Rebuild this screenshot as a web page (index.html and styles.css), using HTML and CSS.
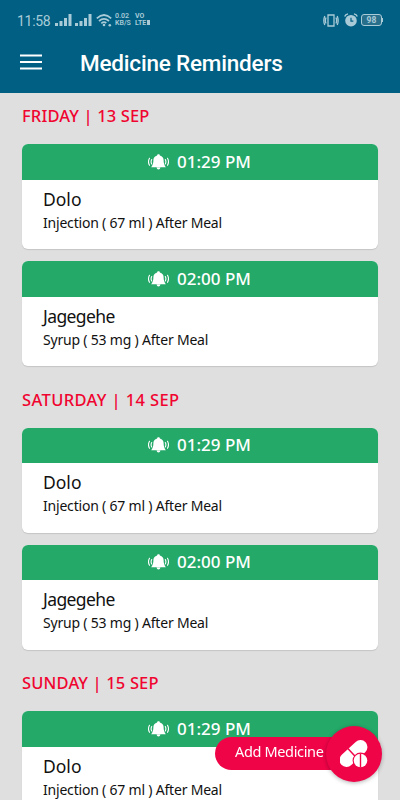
FILE: index.html
```html
<!DOCTYPE html>
<html lang="en">
<head>
  <meta charset="UTF-8" />
  <meta name="viewport" content="width=device-width, initial-scale=1" />
  <title>Medicine Reminders</title>
  <link rel="stylesheet" href="styles.css">
</head>
<body>
  <svg width="0" height="0" class="defs">
    <symbol id="bell" viewBox="0 0 21 16">
      <path fill="#fff" d="M10.500 0.200c.9 0 1.300.5 1.400 1.200 2.400.6 3.700 2.300 3.700 4.700 0 3 .5 4.900 2.200 7.100H3.200c1.700-2.200 2.200-4.100 2.200-7.100 0-2.400 1.300-4.100 3.700-4.700.1-.7.5-1.200 1.400-1.200zM8.600 13.600h3.800c-.2 1.200-.9 1.900-1.900 1.900s-1.700-.7-1.900-1.900z"/>
      <path fill="none" stroke="#fff" stroke-width="1.100" stroke-linecap="round" d="M3.700 5.600q-1.200 2.200 0 4.400M1.500 4.300q-2 3.500 0 7M17.300 5.600q1.200 2.200 0 4.400M19.500 4.300q2 3.500 0 7"/>
    </symbol>
    <symbol id="signal" viewBox="0 0 17 12">
      <path d="M0 9h3v3H0zM4.500 7h3v5h-3zM9 4h3v8H9zM13.500 0h3v12h-3z"/>
    </symbol>
  </svg>

  <header>
    <div class="status-bar">
      <span class="clock">11:58</span>
      <svg class="signal" width="17" height="12"><use href="#signal"/></svg>
      <svg class="signal" width="17" height="12"><use href="#signal"/></svg>
      <svg class="wifi" width="16" height="13" viewBox="0 0 16 13">
        <path d="M.8 4.300Q8-2.300 15.200 4.300M3 7q5-4.400 10 0M5.300 9.300Q8 7 10.300 9"/>
        <circle class="dot" cx="8" cy="11" r="1.300"/>
        <circle class="dot" cx="13.800" cy="11.300" r="1.300"/>
      </svg>
      <span class="tiny speed"><span>0.02</span><span>KB/S</span></span>
      <span class="tiny volte"><span>VO</span><span>LTE<i></i></span></span>
      <span class="status-right">
        <svg class="vibrate" width="16" height="13" viewBox="0 0 16 13">
          <path d="M5 1h6v11H5zM3 3.500Q1.800 6.500 3 9.500M13 3.500q1.200 3 0 6M1.800 2q-2 4.500 0 9M14.200 2q2 4.500 0 9"/>
        </svg>
        <svg class="alarm" width="14" height="14" viewBox="0 0 14 14">
          <circle cx="7" cy="7.700" r="5.800"/>
          <path class="ears" d="M.7 3.600Q1.500 1.400 4 .9M13.300 3.600Q12.500 1.400 10 .9"/>
          <path class="hands" d="M7 4.700v3.500h2.300"/>
        </svg>
        <span class="battery">98</span>
      </span>
    </div>
    <div class="app-bar">
      <svg class="menu" width="22" height="16" viewBox="0 0 22 16">
        <path d="M0 1.500h22M0 8h22M0 14.500h22"/>
      </svg>
      <h1>Medicine Reminders</h1>
    </div>
  </header>

  <main>
    <section>
      <h2 class="friday">FRIDAY | 13 SEP</h2>
      <div class="card">
        <div class="time"><svg width="21" height="16"><use href="#bell"/></svg><span>01:29 PM</span></div>
        <h3>Dolo</h3>
        <p>Injection ( 67 ml ) After Meal</p>
      </div>
      <div class="card">
        <div class="time"><svg width="21" height="16"><use href="#bell"/></svg><span>02:00 PM</span></div>
        <h3 class="long">Jagegehe</h3>
        <p>Syrup ( 53 mg ) After Meal</p>
      </div>
    </section>

    <section>
      <h2 class="saturday">SATURDAY | 14 SEP</h2>
      <div class="card">
        <div class="time"><svg width="21" height="16"><use href="#bell"/></svg><span>01:29 PM</span></div>
        <h3>Dolo</h3>
        <p>Injection ( 67 ml ) After Meal</p>
      </div>
      <div class="card">
        <div class="time"><svg width="21" height="16"><use href="#bell"/></svg><span>02:00 PM</span></div>
        <h3 class="long">Jagegehe</h3>
        <p>Syrup ( 53 mg ) After Meal</p>
      </div>
    </section>

    <section>
      <h2 class="sunday">SUNDAY | 15 SEP</h2>
      <div class="card">
        <div class="time"><svg width="21" height="16"><use href="#bell"/></svg><span>01:29 PM</span></div>
        <h3>Dolo</h3>
        <p>Injection ( 67 ml ) After Meal</p>
      </div>
    </section>
  </main>

  <button class="add">
    <span class="add-label">Add Medicine</span>
    <span class="add-icon">
      <svg width="28" height="28" viewBox="0 0 28 28">
        <g transform="rotate(-43 13.500 13.500)">
          <rect x="-3" y="6.500" width="33" height="14" rx="7" fill="#fff"/>
          <path d="M12.800 6v15" stroke="#f00448" stroke-width="1.500"/>
        </g>
        <circle cx="20.500" cy="20.500" r="7.900" fill="#f00448"/>
        <circle cx="20.500" cy="20.500" r="6.800" fill="#fff"/>
        <path d="M20.500 13.500v14" stroke="#f00448" stroke-width="1.400"/>
      </svg>
    </span>
  </button>
</body>
</html>
```
FILE: styles.css
```css
* {
  box-sizing: border-box;
}
body {
  margin: 0;
  height: 800px;
  overflow: hidden;
  background: #dfdfdf;
  font-family: 'Noto Sans', sans-serif;
  color: #111;
}
.defs {
  display: block;
}
header {
  height: 93px;
  background: #005f82;
  font-family: Roboto, sans-serif;
}
.status-bar {
  display: flex;
  align-items: center;
  height: 40px;
  padding: 0 17px;
  color: #a9cbd8;
}
.clock {
  width: 38px;
  font-size: 14px;
  line-height: 40px;
  letter-spacing: -0.3px;
  padding-top: 1px;
}
.signal {
  fill: #a9cbd8;
  margin-right: 3px;
}
.wifi {
  margin-left: 1px;
  fill: none;
  stroke: #a9cbd8;
  stroke-width: 1.7;
}
.wifi .dot {
  fill: #a9cbd8;
  stroke: none;
}
.tiny {
  display: flex;
  flex-direction: column;
  font-size: 7px;
  line-height: 7px;
  font-weight: 600;
}
.speed {
  width: 20px;
  margin-left: 3px;
}
.volte {
  font-weight: 700;
}
.volte i {
  display: inline-block;
  width: 3px;
  height: 5px;
  margin-left: 1px;
  background: #a9cbd8;
}
.status-right {
  display: flex;
  align-items: center;
  gap: 5px;
  margin-left: auto;
}
.vibrate {
  fill: none;
  stroke: #a9cbd8;
  stroke-width: 1.3;
}
.alarm {
  fill: #a9cbd8;
}
.alarm .ears {
  fill: none;
  stroke: #a9cbd8;
  stroke-width: 1.4;
}
.alarm .hands {
  fill: none;
  stroke: #005f82;
  stroke-width: 1.2;
}
.battery {
  position: relative;
  width: 21px;
  height: 12px;
  margin-left: -2px;
  margin-right: 1px;
  border: 1px solid #a9cbd8;
  border-radius: 3px;
  font-size: 8.5px;
  line-height: 11px;
  font-weight: 700;
  text-align: center;
  background: #286f8c;
}
.battery::after {
  content: '';
  position: absolute;
  right: -2px;
  top: 3px;
  width: 1px;
  height: 4px;
  background: #a9cbd8;
}
.app-bar {
  display: flex;
  align-items: center;
  height: 44px;
  padding-left: 20px;
}
.menu {
  stroke: #fff;
  stroke-width: 2;
}
h1 {
  margin: 0 0 0 38px;
  padding-top: 2px;
  font-size: 22.5px;
  font-weight: 500;
  letter-spacing: -0.2px;
  color: #fff;
}
main {
  padding: 0 22px;
}
section {
  margin-bottom: 10.5px;
}
h2 {
  height: 51px;
  margin: 0;
  font-size: 16.5px;
  font-weight: 500;
  line-height: 45px;
  color: #f00430;
  white-space: nowrap;
}
.friday,
.sunday {
  letter-spacing: 0.15px;
}
.saturday {
  letter-spacing: 0.38px;
}
.card {
  height: 105px;
  margin-bottom: 12px;
  border-radius: 6px;
  background: #fff;
  overflow: hidden;
  box-shadow: 0 1px 1px rgba(0,0,0,0.12);
}
.card:last-child {
  margin-bottom: 0;
}
.time {
  display: flex;
  align-items: center;
  gap: 8px;
  height: 35.5px;
  padding-left: 126px;
  background: #24a969;
  color: #fff;
  font-size: 17px;
  font-weight: 500;
  line-height: 36px;
}
h3 {
  margin: 7.4px 0 0 21px;
  font-size: 17.5px;
  font-weight: 400;
  line-height: 24px;
}
.long {
  letter-spacing: -0.6px;
}
.card p {
  margin: 0 0 0 21px;
  font-size: 14px;
  line-height: 23px;
  letter-spacing: -0.2px;
  white-space: nowrap;
}
.add {
  position: fixed;
  left: 215px;
  top: 725px;
  display: flex;
  align-items: center;
  width: 167px;
  height: 57px;
  padding: 0;
  border: none;
  background: none;
  font-family: inherit;
  color: #fff;
}
.add-label {
  width: 139px;
  height: 33px;
  margin-right: -28px;
  padding-left: 20px;
  border-radius: 17px;
  background: #f00448;
  font-size: 14.5px;
  line-height: 29px;
  letter-spacing: -0.35px;
  text-align: left;
  white-space: nowrap;
}
.add-icon {
  display: flex;
  align-items: center;
  justify-content: center;
  width: 56px;
  height: 56px;
  border-radius: 50%;
  background: #f00448;
  box-shadow: 0 1px 4px rgba(0,0,0,0.3);
}
```
